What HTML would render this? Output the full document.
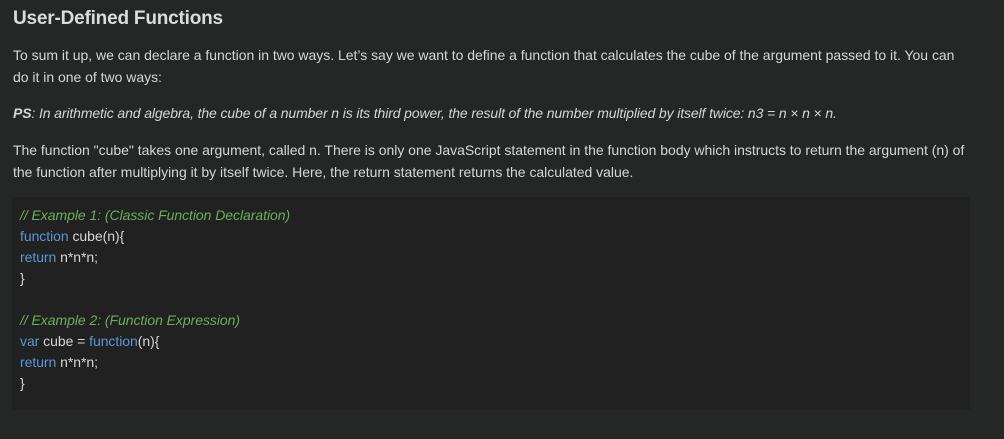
<!DOCTYPE html>
<html><head><meta charset="utf-8"><style>
html,body{margin:0;padding:0;background:#252626;width:1004px;height:439px;overflow:hidden}
body{font-family:"Liberation Sans",Arial,sans-serif;color:#d6d6d6;font-size:14px;letter-spacing:-0.02px}
h2{position:absolute;left:13px;top:8px;margin:0;font-size:19px;font-weight:bold;color:#dcdcdc;letter-spacing:-0.2px}
.p{position:absolute;left:13px;white-space:nowrap;line-height:22px}
.code{position:absolute;left:12px;top:197px;width:958px;height:213px;background:#212121}
.c{position:absolute;left:20px;white-space:nowrap;line-height:21px;font-size:14px;letter-spacing:-0.05px}
.cm{color:#6cae5a;font-style:italic}.kw{color:#5a98d6}
</style></head><body>
<h2>User-Defined Functions</h2>
<div class="p" style="top:44px">To sum it up, we can declare a function in two ways. Let’s say we want to define a function that calculates the cube of the argument passed to it. You can<br>do it in one of two ways:</div>
<div class="p" style="top:102px;font-style:italic;letter-spacing:-0.12px"><b>PS</b>: In arithmetic and algebra, the cube of a number n is its third power, the result of the number multiplied by itself twice: n3 = n × n × n.</div>
<div class="p" style="top:139px">The function "cube" takes one argument, called n. There is only one JavaScript statement in the function body which instructs to return the argument (n) of<br>the function after multiplying it by itself twice. Here, the return statement returns the calculated value.</div>
<div class="code"></div>
<div class="c" style="top:205px"><span class="cm">// Example 1: (Classic Function Declaration)</span><br><span class="kw">function</span> cube(n){<br><span class="kw">return</span> n*n*n;<br>}<br>&nbsp;<br><span class="cm">// Example 2: (Function Expression)</span><br><span class="kw">var</span> cube = <span class="kw">function</span>(n){<br><span class="kw">return</span> n*n*n;<br>}</div>
</body></html>
